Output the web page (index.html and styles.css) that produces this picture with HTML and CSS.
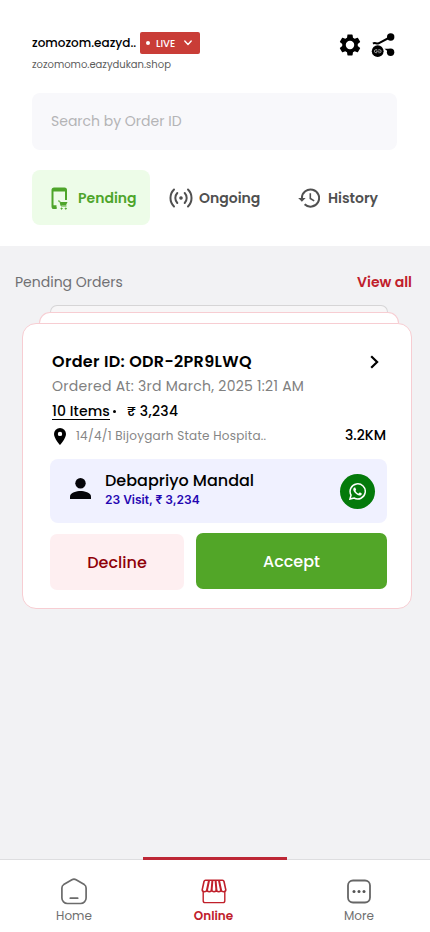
FILE: index.html
```html
<!DOCTYPE html>
<html lang="en">
<head>
<meta charset="utf-8">
<meta name="viewport" content="width=device-width, initial-scale=1">
<title>Orders</title>
<link rel="stylesheet" href="styles.css">
</head>
<body>
<div class="app">
  <header class="top">
    <div class="brand-row">
      <div class="brand">
        <div class="brand-line">
          <span class="shop-name">zomozom.eazyd..</span>
          <button class="live"><i class="live-dot"></i><span class="live-text">LIVE</span>
            <svg width="8" height="6" viewBox="0 0 8 6" fill="none" stroke="#fff" stroke-width="1.4" stroke-linecap="round" stroke-linejoin="round"><path d="M.8 1 4 4.4 7.200 1"/></svg>
          </button>
        </div>
        <div class="shop-url">zozomomo.eazydukan.shop</div>
      </div>
      <div class="tools">
        <svg class="gear" width="26" height="26" viewBox="0 0 24 24" fill="#000"><path d="M19.140 12.940c.04-.3.060-.61.060-.94 0-.32-.02-.64-.07-.94l2.030-1.580a.49.490 0 0 0 .12-.61l-1.920-3.320a.488.488 0 0 0-.59-.22l-2.390.96c-.5-.38-1.030-.7-1.620-.94l-.36-2.540a.484.484 0 0 0-.48-.41h-3.840c-.24 0-.43.170-.47.410l-.36 2.540c-.59.240-1.130.570-1.620.940l-2.390-.96c-.22-.08-.47 0-.59.220L2.740 8.870c-.12.210-.08.470.12.610l2.030 1.580c-.05.300-.09.630-.09.940s.02.640.070.940l-2.030 1.580a.49.490 0 0 0-.12.610l1.920 3.320c.12.220.370.290.590.220l2.390-.96c.5.380 1.030.700 1.620.940l.36 2.540c.05.240.24.410.480.410h3.840c.24 0 .44-.17.470-.41l.36-2.540c.59-.24 1.130-.56 1.620-.94l2.390.96c.22.080.47 0 .59-.22l1.920-3.320c.12-.22.070-.47-.12-.61l-2.010-1.580zM12 15.900a3.900 3.900 0 1 1 0-7.800 3.900 3.900 0 0 1 0 7.800z"/></svg>
        <svg class="share" width="25" height="25" viewBox="0 0 25 25"><path d="M2 10.600c2-1.500 3.300.5 5.600-.3L19.500 4" fill="none" stroke="#000" stroke-width="2"/><circle cx="19.700" cy="4" r="3.700"/><circle cx="19.600" cy="19.300" r="3.700"/><path d="m13.500 15.800 5-.1v4z"/><circle cx="6.700" cy="18.200" r="5.900"/><path d="M6.200 16.700H4.900a1.500 1.500 0 0 0 0 3h1.300M7.400 16.700h1.200a1.500 1.500 0 0 1 0 3H7.400M5 18.200h3.600" fill="none" stroke="#ddd" stroke-width=".7"/></svg>
      </div>
    </div>
    <div class="search"><span>Search by Order ID</span></div>
    <nav class="tabs">
      <a class="tab active">
        <svg width="18" height="24" viewBox="0 0 18 24" fill="none" stroke="#4ea52b"><path d="M5.500 21H3a1.500 1.500 0 0 1-1.500-1.500V3A1.500 1.500 0 0 1 3 1.500h10.500A1.500 1.500 0 0 1 15 3v10" stroke-width="2"/><path d="M1.500 3h13" stroke-width="3"/><path d="M1.500 20h4" stroke-width="3.500"/><path d="M7 14h1.700l1.500 5h5.300" stroke-width="1"/><path d="M9 15h7.500l-1.500 3.200h-5z" fill="#4ea52b" stroke="none"/><circle cx="10.600" cy="21.600" r=".6" fill="#4ea52b"/><circle cx="14.800" cy="21.600" r=".6" fill="#4ea52b"/></svg>
        <span>Pending</span>
      </a>
      <a class="tab ongoing">
        <svg width="24" height="20" viewBox="0 0 24 20" fill="none" stroke="#505050" stroke-width="2" stroke-linecap="round"><path d="M5 1.500a12 12 0 0 0 0 17M19 1.500a12 12 0 0 1 0 17M8.300 5a7.300 7.300 0 0 0 0 10M15.700 5a7.300 7.300 0 0 1 0 10"/><circle cx="12" cy="10" r="1.200" fill="#505050" stroke-width="1.200"/></svg>
        <span>Ongoing</span>
      </a>
      <a class="tab history">
        <svg width="22" height="20" viewBox="0 0 22 20" fill="none" stroke="#505050" stroke-width="2"><path d="M3.900 10a8.600 8.600 0 1 1 2.700 6.300"/><path d="M.2 10h7.400L3.900 13.700z" fill="#505050" stroke="none"/><path d="M12.300 5.300v5.200l3.900 2.400" stroke-width="1.600"/></svg>
        <span>History</span>
      </a>
    </nav>
  </header>

  <main class="content">
    <div class="section-head"><span>Pending Orders</span><a class="view-all">View all</a></div>
    <div class="stack">
      <div class="sheet sheet-back"></div>
      <div class="sheet sheet-mid"></div>
      <article class="card">
        <div class="row order"><span class="order-id">Order ID: ODR-2PR9LWQ</span>
          <svg width="9" height="14" viewBox="0 0 9 14" fill="none" stroke="#000" stroke-width="2.200"><path d="m1.200 1.300 5.900 5.700-5.900 5.700"/></svg></div>
        <div class="row"><span class="date">Ordered At: 3rd March, 2025 1:21 AM</span></div>
        <div class="row amounts"><span class="items">10 Items</span><i class="dot"></i><span class="price">₹ 3,234</span></div>
        <div class="row place">
          <svg width="12" height="17" viewBox="0 0 12 17"><path fill-rule="evenodd" d="M6 0a6 6 0 0 0-6 6c0 4.400 6 11 6 11s6-6.600 6-11a6 6 0 0 0-6-6zm0 8.100a2.200 2.200 0 1 1 0-4.400 2.200 2.200 0 0 1 0 4.400z"/></svg>
          <span class="address">14/4/1 Bijoygarh State Hospita..</span><span class="km">3.2KM</span>
        </div>
        <div class="customer">
          <svg width="21" height="21" viewBox="0 0 21 21" fill="#05050a"><circle cx="10.500" cy="5.200" r="5.200"/><path d="M0 21v-2.600c0-3.500 7-5.300 10.500-5.300S21 14.900 21 18.400V21z"/></svg>
          <div class="who"><span class="name">Debapriyo Mandal</span><span class="visits">23 Visit, ₹ 3,234</span></div>
          <button class="wa"><svg width="17" height="17" viewBox="0 0 24 24" fill="#fff"><path d="M17.500 14.400c-.3-.15-1.760-.87-2.030-.97s-.47-.15-.67.150-.77.970-.94 1.160-.35.220-.64.080c-.3-.15-1.260-.46-2.390-1.480-.88-.79-1.480-1.760-1.650-2.060s-.02-.46.130-.6c.13-.13.300-.35.440-.52.150-.17.200-.3.300-.5.100-.2.050-.37-.02-.52-.08-.15-.67-1.610-.92-2.210-.24-.58-.49-.5-.67-.51h-.57c-.2 0-.52.070-.79.370s-1.040 1.020-1.040 2.480 1.070 2.880 1.210 3.070c.15.200 2.100 3.200 5.080 4.490 2.980 1.290 2.980.86 3.520.8.540-.05 1.760-.72 2.010-1.410.25-.69.250-1.290.170-1.410-.07-.12-.27-.2-.57-.35z"/><path d="M1.300 22.700l1.600-5.700A10.700 10.700 0 1 1 7.100 21.200z" fill="none" stroke="#fff" stroke-width="2.100"/></svg></button>
        </div>
        <div class="actions"><button class="decline"><span>Decline</span></button><button class="accept"><span>Accept</span></button></div>
      </article>
    </div>
  </main>

  <footer class="bottom">
    <a class="nav-item home">
      <svg width="28" height="27" viewBox="0 0 28 27" fill="none" stroke="#6b6b6b" stroke-width="1.700" stroke-linecap="round" stroke-linejoin="round"><path d="M11.900 1.700 3.700 6.600A4 4 0 0 0 1.900 10v10a5.500 5.500 0 0 0 5.500 5.500h13.200a5.500 5.500 0 0 0 5.500-5.500V10a4 4 0 0 0-1.800-3.400l-8.200-4.900a4 4 0 0 0-4.200 0zM10.300 20.200h7.400"/></svg>
      <span>Home</span>
    </a>
    <a class="nav-item current">
      <svg width="26" height="25" viewBox="0 0 26 25" fill="none" stroke="#c0202b" stroke-width="1.600" stroke-linejoin="round"><path d="M4.500 1.200h17c.8 0 1.300.5 1.500 1.300l1.800 8.300c0 2.500-4.200 2.500-4.700 0 0 2.500-4.700 2.500-4.700 0 0 2.500-4.800 2.500-4.800 0 0 2.500-4.700 2.500-4.700 0-.5 2.500-4.700 2.500-4.700 0L3 2.500c.2-.8.700-1.300 1.500-1.300z"/><path d="M8 1.500 6 11M11.400 1.500l-.8 9.500M14.600 1.500l.8 9.500M18 1.500 20 11" stroke-width="2"/><path d="M2.200 12.800v8.900c0 1.200.7 1.900 1.900 1.900h17.800c1.200 0 1.900-.7 1.900-1.900v-8.900" stroke-width="1.400"/></svg>
      <span>Online</span>
    </a>
    <a class="nav-item more">
      <svg width="24" height="24" viewBox="0 0 24 24"><rect x="1" y="1" width="22" height="22" rx="5" fill="none" stroke="#666" stroke-width="1.800"/><g fill="#555"><circle cx="7" cy="12" r="1.500"/><circle cx="12" cy="12" r="1.500"/><circle cx="17" cy="12" r="1.500"/></g></svg>
      <span>More</span>
    </a>
  </footer>
</div>
</body>
</html>
```
FILE: styles.css
```css
* { box-sizing: border-box; }
body { margin: 0; background: #f2f2f4; font-family: Poppins, Inter, sans-serif; color: #000; }
button { border: 0; padding: 0; margin: 0; font: inherit; color: inherit; }
svg { display: block; flex: none; }
span, a { white-space: nowrap; }
.app { width: 430px; height: 932px; display: flex; flex-direction: column; overflow: hidden; }

.top { height: 246px; background: #fff; padding: 32px 33px 0 32px; flex: none; }
.brand-row { display: flex; justify-content: space-between; height: 61px; }
.brand-line { display: flex; align-items: center; height: 22px; }
.shop-name { width: 108px; font-size: 12px; font-weight: 500; line-height: 20px; }
.live { width: 60px; height: 22px; border-radius: 2px; background: #c93d37; color: #fff; display: flex; align-items: center; padding-left: 6px; }
.live-dot { width: 4px; height: 4px; border-radius: 50%; background: #fff; margin-right: 6px; }
.live-text { width: 28px; font-size: 10px; font-weight: 500; line-height: 14px; padding-top: 1px; text-align: left; }
.shop-url { font-size: 10px; line-height: 14px; margin-top: 4px; color: #5c5c5c; }
.tools { display: flex; gap: 8px; margin-right: 1px; }
.share { margin-top: 1px; }

.search { height: 57px; border-radius: 8px; background: #f8f8fb; padding-left: 19px; display: flex; align-items: center; font-size: 14px; color: #b4b4b6; }
.tabs { display: flex; margin-top: 20px; height: 55px; }
.tab { display: flex; align-items: center; font-size: 14px; font-weight: 600; color: #505050; }
.tab span { padding-top: 2px; }
.tab.active { width: 118px; border-radius: 8px; background: #edfce8; color: #4ea52b; padding-left: 19px; gap: 9px; }
.tab.active svg { margin-top: 2px; }
.ongoing { padding-left: 19px; width: 148px; gap: 6px; }
.history { gap: 8px; }

.content { flex: 1; }
.section-head { display: flex; justify-content: space-between; padding: 26px 18px 0 15px; font-size: 14px; line-height: 20px; color: #707073; height: 59px; }
.view-all { color: #c0202b; font-weight: 600; }
.stack { display: flex; flex-direction: column; align-items: center; padding-left: 4px; }
.sheet { border: 1px solid #f7cdd2; border-bottom: 0; background: #fff; }
.sheet-back { width: 338px; height: 7px; border-radius: 14px 14px 0 0; border-color: #d6d5d6; background: #f7f6f7; margin-left: 3px; }
.sheet-mid { width: 360px; height: 11px; border-radius: 12px 12px 0 0; margin-left: 4px; }
.card { width: 390px; height: 286px; border: 1px solid #f7cdd2; border-radius: 14px; background: #fff; padding: 25px 24px 0 27px; }
.row { display: flex; align-items: center; height: 25px; padding-left: 2px; }
.order { justify-content: space-between; padding-right: 8px; }
.order-id { font-size: 16px; font-weight: 600; letter-spacing: .32px; }
.date { font-size: 14px; color: #808080; letter-spacing: .27px; }
.amounts { font-size: 14px; font-weight: 500; }
.items { line-height: 15px; border-bottom: 1px solid #000; margin-top: 1px; letter-spacing: .1px; }
.dot { width: 3px; height: 3px; border-radius: 50%; background: #000; margin: 0 11px 0 3px; }
.price { letter-spacing: .3px; }
.place { padding-left: 4px; height: 24px; }
.address { flex: 1; margin-left: 10px; font-size: 12px; color: #858585; letter-spacing: .26px; }
.km { font-size: 14px; font-weight: 500; margin: -1px 1px 0 0; }
.customer { height: 64px; margin-top: 11px; border-radius: 8px; background: #f0f1ff; display: flex; align-items: center; padding: 0 12px 0 20px; }
.customer > svg { margin-top: -6px; }
.who { flex: 1; display: flex; flex-direction: column; padding: 0 0 3px 14px; }
.name { font-size: 16px; font-weight: 500; line-height: 20px; }
.visits { font-family: Inter, sans-serif; font-size: 12px; font-weight: 600; line-height: 18px; color: #2406b2; }
.wa { width: 35px; height: 35px; border-radius: 50%; background: #047a0b; display: grid; place-items: center; }
.actions { display: flex; gap: 12px; margin-top: 10px; font-size: 16px; font-weight: 500; }
.decline { width: 134px; height: 56px; margin-top: 1px; border-radius: 7px; background: #feeff1; color: #8f0008; }
.accept { width: 191px; height: 56px; border-radius: 7px; background: #52a628; color: #fff; }

.bottom { height: 75px; flex: none; display: grid; grid-template-columns: 143px 144px 143px; background: linear-gradient(#dedee0 0 1px, #fff 1px) 0 2px / 100% 73px no-repeat; }
.nav-item { display: flex; flex-direction: column; align-items: center; border-top: 3px solid transparent; padding-top: 18px; font-size: 12px; line-height: 16px; color: #6f6f6f; }
.nav-item svg { height: 27px; margin-bottom: 3px; }
.current { border-color: #bd2735; color: #c0202b; font-weight: 600; }
.home { padding-left: 5px; }
.more { padding-left: 1px; }
.current svg { margin-left: -2px; }
.current span { margin-left: -3px; }
```
